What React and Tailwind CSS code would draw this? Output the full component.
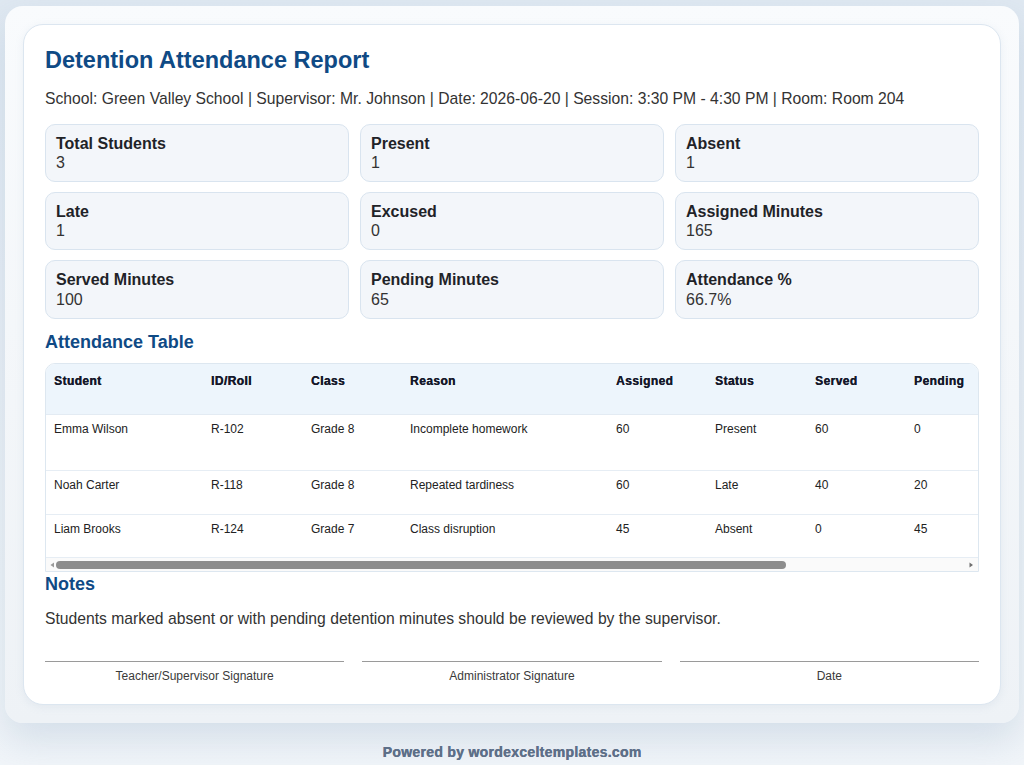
import React from "react";

const stats = [
  { label: "Total Students", value: "3" },
  { label: "Present", value: "1" },
  { label: "Absent", value: "1" },
  { label: "Late", value: "1" },
  { label: "Excused", value: "0" },
  { label: "Assigned Minutes", value: "165" },
  { label: "Served Minutes", value: "100" },
  { label: "Pending Minutes", value: "65" },
  { label: "Attendance %", value: "66.7%" },
];

const columns = [
  { key: "student", label: "Student", w: "w-[157px]" },
  { key: "id", label: "ID/Roll", w: "w-[100px]" },
  { key: "cls", label: "Class", w: "w-[99px]" },
  { key: "reason", label: "Reason", w: "w-[206px]" },
  { key: "assigned", label: "Assigned", w: "w-[99px]" },
  { key: "status", label: "Status", w: "w-[100px]" },
  { key: "served", label: "Served", w: "w-[99px]" },
  { key: "pending", label: "Pending", w: "w-[99px]" },
  { key: "extra", label: "", w: "w-[194px]" },
];

const rows = [
  {
    h: "h-[56px]",
    student: "Emma Wilson",
    id: "R-102",
    cls: "Grade 8",
    reason: "Incomplete homework",
    assigned: "60",
    status: "Present",
    served: "60",
    pending: "0",
  },
  {
    h: "h-[44px]",
    student: "Noah Carter",
    id: "R-118",
    cls: "Grade 8",
    reason: "Repeated tardiness",
    assigned: "60",
    status: "Late",
    served: "40",
    pending: "20",
  },
  {
    h: "h-[43px]",
    student: "Liam Brooks",
    id: "R-124",
    cls: "Grade 7",
    reason: "Class disruption",
    assigned: "45",
    status: "Absent",
    served: "0",
    pending: "45",
  },
];

const StatCard = ({ label, value }) => (
  <div className="rounded-[10px] border border-[#d9e4ef] bg-[#f3f6fa] px-[10px] py-[9px] leading-[1.2] text-[16px]">
    <div className="font-bold text-[#1f2328]">{label}</div>
    <div className="text-[#333]">{value}</div>
  </div>
);

export default function App() {
  return (
    <div
      className="min-h-[765px] bg-gradient-to-b from-[#dfe8f1] via-[#e9eff5] to-[#f1f5f9] px-[5px] pt-[6px]"
      style={{ fontFamily: '"Liberation Sans", Arial, sans-serif' }}
    >
      <div className="rounded-[18px] bg-gradient-to-b from-[#f9fbfd] to-[#eef2f6] p-[18px] shadow-[0_18px_36px_rgba(120,150,180,0.22)]">
        <div className="rounded-[20px] border border-[#dce6f0] bg-white p-[21px] shadow-[0_2px_8px_rgba(140,165,190,0.12)]">
          <h1 className="text-[23.5px] font-bold leading-[1.2] text-[#0f4a85]">
            Detention Attendance Report
          </h1>
          <p className="mt-[13px] text-[15.7px] leading-[1.5] text-[#333]">
            School: Green Valley School | Supervisor: Mr. Johnson | Date: 2026-06-20 | Session: 3:30 PM - 4:30 PM | Room: Room 204
          </p>

          <div className="mt-[13px] grid grid-cols-3 gap-x-[11px] gap-y-[10px]">
            {stats.map((s) => (
              <StatCard key={s.label} label={s.label} value={s.value} />
            ))}
          </div>

          <h2 className="mt-[13px] text-[18px] font-bold leading-[1.2] text-[#0f4a85]">
            Attendance Table
          </h2>

          <div className="mt-[10px] overflow-hidden rounded-t-[10px] border border-[#dde7f0]">
            <div className="overflow-hidden">
              <table className="w-[1153px] table-fixed border-collapse text-left text-[12px] leading-[14px]">
                <thead>
                  <tr className="h-[50px] bg-[#edf5fc]">
                    {columns.map((c) => (
                      <th
                        key={c.key}
                        className={`${c.w} border-b border-[#e3ebf3] px-[8px] pt-[10px] align-top font-bold tracking-[0.4px] text-[#15182a] [text-shadow:0.35px_0_0_#15182a]`}
                      >
                        {c.label}
                      </th>
                    ))}
                  </tr>
                </thead>
                <tbody>
                  {rows.map((r, i) => (
                    <tr key={r.id} className={`${r.h} ${i < rows.length - 1 ? "border-b border-[#e6edf4]" : ""}`}>
                      {columns.map((c) => (
                        <td key={c.key} className="px-[8px] pt-[7px] align-top text-[#222]">
                          {r[c.key] || ""}
                        </td>
                      ))}
                    </tr>
                  ))}
                </tbody>
              </table>
            </div>
            {/* horizontal scrollbar */}
            <div className="flex h-[14px] items-center border-t border-[#e6edf4] bg-[#fafafa] px-[3px]">
              <svg width="7" height="8" viewBox="0 0 7 8" className="shrink-0">
                <path d="M5 1.5 L1.5 4 L5 6.5 Z" fill="#9a9a9a" />
              </svg>
              <div className="flex-1">
                <div className="h-[8px] w-[730px] rounded-full bg-[#8d8d8d]" />
              </div>
              <svg width="8" height="8" viewBox="0 0 8 8" className="shrink-0">
                <path d="M2.5 1.5 L6 4 L2.5 6.5 Z" fill="#6f6f6f" />
              </svg>
            </div>
          </div>

          <h2 className="mt-[2px] text-[18px] font-bold leading-[1.2] text-[#0f4a85]">Notes</h2>
          <p className="mt-[11px] text-[15.7px] leading-[1.5] text-[#333]">
            Students marked absent or with pending detention minutes should be reviewed by the supervisor.
          </p>

          <div className="mt-[30px] grid grid-cols-3 gap-x-[18px]">
            {["Teacher/Supervisor Signature", "Administrator Signature", "Date"].map((t) => (
              <div key={t}>
                <div className="h-px bg-[#9a9a9a]" />
                <div className="mt-[7px] text-center text-[12px] leading-[14px] text-[#3a3a3a]">{t}</div>
              </div>
            ))}
          </div>
        </div>
      </div>

      <div className="pb-[4px] pt-[21px] text-center text-[14px] font-bold leading-[16px] tracking-[0.3px] text-[#5d6f88] [text-shadow:0.35px_0_0_#5d6f88]">
        Powered by wordexceltemplates.com
      </div>
    </div>
  );
}
